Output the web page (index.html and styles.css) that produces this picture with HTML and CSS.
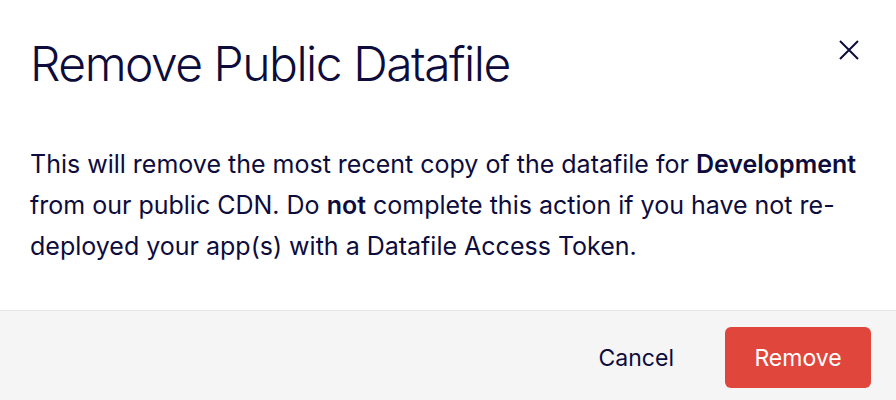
FILE: index.html
```html
<!DOCTYPE html>
<html>
<head>
<meta charset="utf-8">
<link rel="stylesheet" href="styles.css">
</head>
<body>
<div class="modal">
  <div class="modal-header">
    <h1 class="modal-title">Remove Public Datafile</h1>
    <button class="close-btn" aria-label="Close">
      <svg width="20" height="20" viewBox="0 0 20 20"><path d="M1 1 L19 19 M19 1 L1 19" stroke="#0d0c3c" stroke-width="2" fill="none"/></svg>
    </button>
  </div>
  <div class="modal-body">
    <p>This will remove the most recent copy of the datafile for <strong>Development</strong> from our public CDN. Do <strong>not</strong> complete this action if you have not re-deployed your app(s) with a Datafile Access Token.</p>
  </div>
  <div class="modal-footer">
    <button class="btn btn-cancel">Cancel</button>
    <button class="btn btn-remove">Remove</button>
  </div>
</div>
</body>
</html>
```
FILE: styles.css
```css
html, body {
  margin: 0;
  padding: 0;
  background: #ffffff;
}
body {
  font-family: Inter, "Noto Sans", sans-serif;
  color: #0d0c3c;
  width: 896px;
  height: 400px;
  overflow: hidden;
}
.modal {
  display: flex;
  flex-direction: column;
  height: 400px;
}
.modal-header {
  display: flex;
  justify-content: space-between;
  align-items: flex-start;
  padding: 35px 30px 0 30px;
}
.modal-title {
  margin: 0;
  font-size: 48px;
  font-weight: 300;
  line-height: 58px;
  letter-spacing: -1.5px;
}
.close-btn {
  background: none;
  border: none;
  padding: 0;
  margin: 5px 7px 0 0;
  width: 20px;
  height: 20px;
  display: flex;
}
.modal-body {
  padding: 51px 30px 0 30px;
  flex: 1;
}
.modal-body p {
  margin: 0;
  font-size: 25px;
  line-height: 41px;
  font-weight: 400;
}
.modal-body strong {
  font-weight: 600;
}
.modal-footer {
  display: flex;
  justify-content: flex-end;
  align-items: flex-start;
  gap: 26px;
  height: 90px;
  box-sizing: border-box;
  padding: 16px 25px 13px 0;
  background: #f5f5f5;
  border-top: 1px solid #e6e6e6;
}
.btn {
  font-family: Inter, "Noto Sans", sans-serif;
  font-size: 23px;
  height: 61px;
  border: none;
  border-radius: 6px;
  padding: 0 25px;
  cursor: pointer;
}
.btn-cancel {
  background: transparent;
  color: #0d0c3c;
}
.btn-remove {
  background: #e1463d;
  color: #ffffff;
  width: 146px;
}
```
